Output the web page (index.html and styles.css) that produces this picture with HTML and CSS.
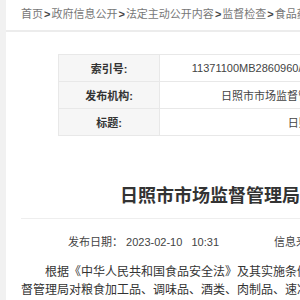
FILE: index.html
```html
<!DOCTYPE html>
<html lang="zh-CN">
<head>
  <meta charset="UTF-8">
  <meta name="viewport" content="width=device-width, initial-scale=1.0">
  <title>日照市市场监督管理局 - 政府信息公开</title>
  <link rel="stylesheet" href="styles.css">
</head>
<body>
  <div class="page">
    <div class="crumbs">
      <a href="#">首页</a><span class="sep">&gt;</span><a href="#">政府信息公开</a><span class="sep">&gt;</span><a href="#">法定主动公开内容</a><span class="sep">&gt;</span><a href="#">监督检查</a><span class="sep">&gt;</span><a href="#">食品药品监督检查</a>
    </div>

    <table class="meta">
      <tr>
        <th>索引号:</th>
        <td>11371100MB2860960/2023-00016</td>
        <th>主题分类:</th>
        <td>监督检查</td>
      </tr>
      <tr>
        <th>发布机构:</th>
        <td>日照市市场监督管理局</td>
        <th>成文日期:</th>
        <td>2023-02-10</td>
      </tr>
      <tr>
        <th>标题:</th>
        <td colspan="3">日照市市场监督管理局关于2023年食品安全监督抽检信息的通告</td>
      </tr>
    </table>

    <h1 class="article-title">日照市市场监督管理局关于2023年食品安全监督抽检信息的通告</h1>

    <div class="info">
      <span>发布日期： 2023-02-10&nbsp;&nbsp;&nbsp;10:31</span>
      <span class="source">信息来源： 日照市市场监督管理局</span>
    </div>

    <div class="content">
      <p>根据《中华人民共和国食品安全法》及其实施条例等法律法规规定，日照市市场监督管理局对粮食加工品、调味品、酒类、肉制品、速冻食品等食品进行了监督抽检，现将抽检结果通告如下。</p>
    </div>
  </div>
</body>
</html>
```

FILE: styles.css
```css
body {
  margin: 0;
  background-color: #f1f1f1;
  font-family: "Liberation Sans", "Noto Sans CJK SC", sans-serif;
  color: #333;
  overflow: hidden;
}

.page {
  margin-left: 6px;
  width: 1000px;
  min-height: 100vh;
  background-color: #fff;
  padding: 0 15px;
}

.crumbs {
  height: 30px;
  line-height: 29px;
  font-size: 11px;
  color: #777;
  border-bottom: 2px solid #ececec;
  margin: 0 -15px;
  padding: 0 15px;
  white-space: nowrap;
}

.crumbs a {
  color: #777;
  text-decoration: none;
}

.crumbs .sep {
  color: #444;
  font-weight: bold;
  margin: 0 1px;
}

.meta {
  margin: 22px 0 0 37px;
  border-collapse: collapse;
  font-size: 11px;
}

.meta th,
.meta td {
  height: 26px;
  padding: 0;
  border: 1px solid #e8e8e8;
  text-align: center;
  white-space: nowrap;
}

.meta th {
  width: 100px;
  background-color: #f6f6f6;
  color: #333;
  font-weight: bold;
}

.meta td {
  width: 232px;
  color: #444;
}

.meta .code {
  letter-spacing: 0.5px;
}

.article-title {
  margin: 47px 0 0;
  padding: 0 0 9px 99px;
  font-size: 18px;
  line-height: 26px;
  color: #333;
  white-space: nowrap;
  border-bottom: 1px solid #eee;
}

.info {
  margin: 14px 0 0 47px;
  font-size: 11px;
  line-height: 18px;
  color: #444;
  white-space: nowrap;
}

.info .source {
  margin-left: 52px;
}

.content p {
  margin: 12px 0 0;
  width: 457px;
  font-size: 12px;
  line-height: 18px;
  text-indent: 2em;
  color: #333;
}
```
